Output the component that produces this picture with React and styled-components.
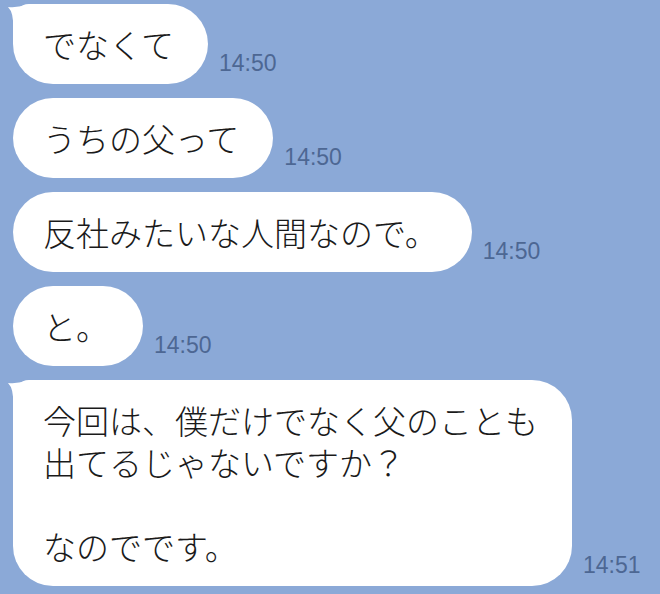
import React from "react";
import styled, { createGlobalStyle } from "styled-components";

const GlobalStyle = createGlobalStyle`
  html, body {
    margin: 0;
    padding: 0;
    background: #8ba9d7;
  }
`;

const Chat = styled.div`
  width: 660px;
  height: 594px;
  overflow: hidden;
  box-sizing: border-box;
  padding: 4px 0 0 13px;
  background: #8ba9d7;
  display: flex;
  flex-direction: column;
  gap: 14px;
`;

const Row = styled.div`
  display: flex;
  align-items: flex-end;
  gap: 11px;
`;

const Bubble = styled.div`
  position: relative;
  background: #ffffff;
  border-radius: 40px;
  padding: 19px 34px 19px 30px;
  color: #1a1a1a;
  font-family: "Noto Sans CJK JP", "Noto Sans", sans-serif;
  font-size: 33px;
  font-weight: 300;
  line-height: 42px;
  white-space: pre-line;
  border-top-left-radius: ${(p) => (p.$tail ? "16px" : "40px")};
`;

const Tail = styled.svg`
  position: absolute;
  left: -6px;
  top: 0;
  width: 30px;
  height: 30px;
`;

const Time = styled.span`
  font-family: "Liberation Sans", Arial, sans-serif;
  font-size: 23px;
  line-height: 23px;
  color: #4d6793;
  margin-bottom: 9px;
`;

const messages = [
  { text: "でなくて", time: "14:50", tail: true },
  { text: "うちの父って", time: "14:50" },
  { text: "反社みたいな人間なので。", time: "14:50" },
  { text: "と。", time: "14:50" },
  {
    text: "今回は、僕だけでなく父のことも\n出てるじゃないですか？\n\nなのでです。",
    time: "14:51",
    tail: true,
  },
];

const Message = ({ text, time, tail }) => (
  <Row>
    <Bubble $tail={tail}>
      {tail && (
        <Tail viewBox="0 0 30 30">
          <path d="M1 3 Q12 4 24 0 L30 0 L30 30 L6 30 L6 24 Q7 9 1 3 Z" fill="#ffffff" />
        </Tail>
      )}
      {text}
    </Bubble>
    <Time>{time}</Time>
  </Row>
);

export default function App() {
  return (
    <>
      <GlobalStyle />
      <Chat>
        {messages.map((m, i) => (
          <Message key={i} {...m} />
        ))}
      </Chat>
    </>
  );
}
